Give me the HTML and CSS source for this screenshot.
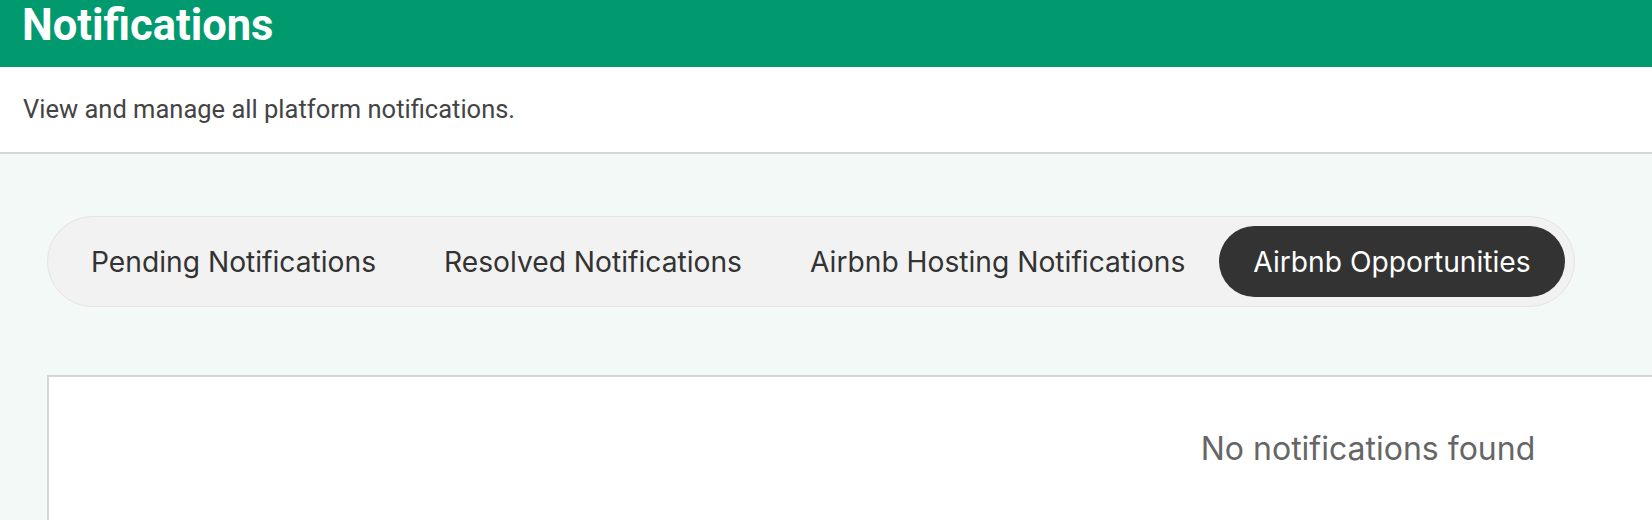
FILE: index.html
```html
<!DOCTYPE html>
<html lang="en">
<head>
<meta charset="utf-8">
<title>Notifications</title>
<link rel="stylesheet" href="styles.css">
</head>
<body>
  <header class="page-header">
    <h1 class="page-title">Notifications</h1>
  </header>
  <section class="page-intro">
    <p class="page-subtitle">View and manage all platform notifications.</p>
  </section>
  <main class="page-main">
    <nav class="tabs">
      <button class="tab">Pending Notifications</button>
      <button class="tab">Resolved Notifications</button>
      <button class="tab">Airbnb Hosting Notifications</button>
      <button class="tab tab-active">Airbnb Opportunities</button>
    </nav>
    <section class="card">
      <p class="empty">No notifications found</p>
    </section>
  </main>
</body>
</html>
```
FILE: styles.css
```css
html, body {
  margin: 0;
  padding: 0;
  overflow: hidden;
  background: #f3f9f7;
}
body {
  width: 1652px;
  height: 520px;
}
.page-header {
  background: #019a6f;
  height: 67px;
  box-sizing: border-box;
  padding: 0 22px;
}
.page-title {
  margin: 0;
  font-family: Roboto, "Liberation Sans", sans-serif;
  font-weight: 700;
  font-size: 43.5px;
  line-height: 51px;
  color: #ffffff;
}
.page-intro {
  background: #ffffff;
  height: 87px;
  box-sizing: border-box;
  padding: 27px 23px 0;
  border-bottom: 2px solid #d6d6d6;
}
.page-subtitle {
  margin: 0;
  font-family: Roboto, "Liberation Sans", sans-serif;
  font-size: 25.5px;
  line-height: 30px;
  color: #444444;
}
.page-main {
  padding: 62px 0 0 47px;
}
.tabs {
  display: inline-flex;
  padding: 9px;
  border: 1px solid #e4e4e4;
  border-radius: 999px;
  background: #f2f2f2;
}
.tab {
  border: 0;
  background: transparent;
  padding: 0 34px;
  height: 71px;
  border-radius: 999px;
  font-family: Inter, "Noto Sans", sans-serif;
  font-weight: 400;
  font-size: 28.2px;
  color: #333333;
  white-space: nowrap;
}
.tab-active {
  background: #333333;
  color: #ffffff;
}
.card {
  margin-top: 68px;
  width: 2642px;
  box-sizing: border-box;
  border: 2px solid #d6d6d6;
  background: #ffffff;
  padding: 52px 0 100px;
}
.empty {
  margin: 0;
  text-align: center;
  font-family: Inter, "Noto Sans", sans-serif;
  font-size: 32px;
  color: #666666;
}
```
